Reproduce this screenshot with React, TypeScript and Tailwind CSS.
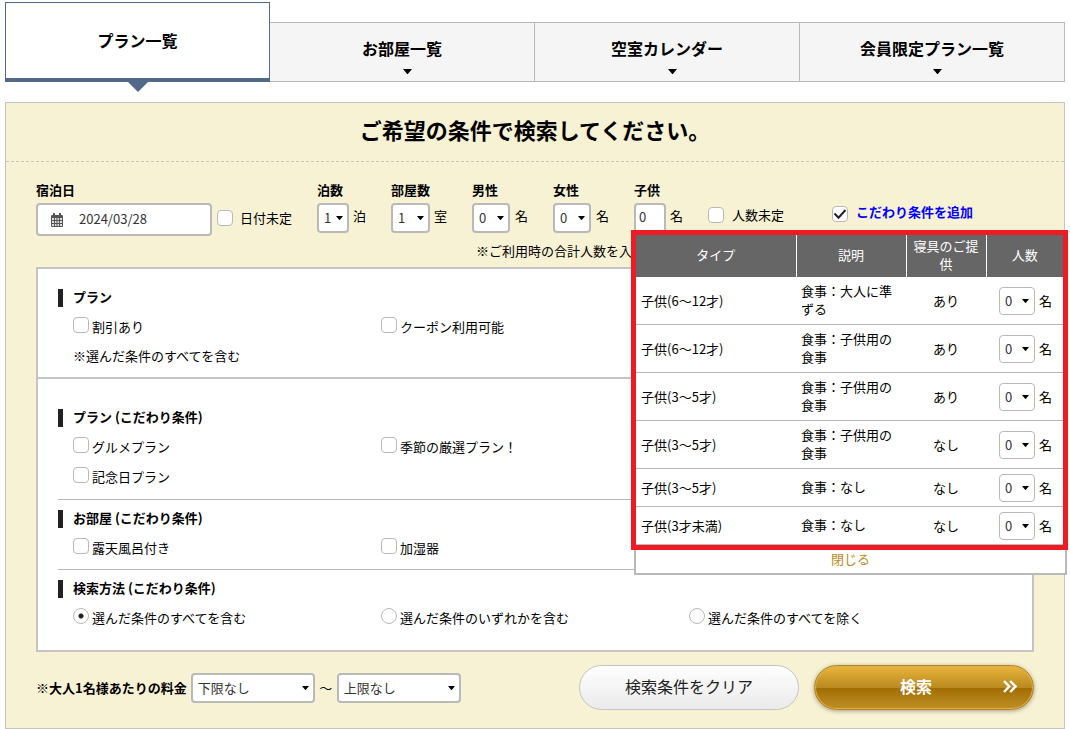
import { useState, type ReactNode } from "react";
import clsx from "clsx";

const TABS = ["お部屋一覧", "空室カレンダー", "会員限定プラン一覧"];

const CHILD_ROWS = [
    { type: "子供(6～12才)", note: "食事：大人に準ずる", bedding: "あり" },
    { type: "子供(6～12才)", note: "食事：子供用の食事", bedding: "あり" },
    { type: "子供(3～5才)", note: "食事：子供用の食事", bedding: "あり" },
    { type: "子供(3～5才)", note: "食事：子供用の食事", bedding: "なし" },
    { type: "子供(3～5才)", note: "食事：なし", bedding: "なし" },
    { type: "子供(3才未満)", note: "食事：なし", bedding: "なし" },
];

const METHODS = ["選んだ条件のすべてを含む", "選んだ条件のいずれかを含む", "選んだ条件のすべてを除く"];

function Caret({ className }: { className?: string }) {
    return (
        <svg className={clsx("pointer-events-none", className)} viewBox="0 0 8 4" preserveAspectRatio="none" aria-hidden="true">
            <path d="M0 0h8L4.5 3.8a.8.8 0 0 1-1 0z" fill="#000" />
        </svg>
    );
}

function CalendarIcon({ className }: { className?: string }) {
    return (
        <svg className={className} width="12" height="14" viewBox="0 0 12 14" aria-hidden="true">
            <path d="M2 0h2v2h4V0h2v2h1a1 1 0 0 1 1 1v10a1 1 0 0 1-1 1H1a1 1 0 0 1-1-1V3a1 1 0 0 1 1-1h1z" fill="#555" />
            <path
                d="M1 5h2v2H1zM4 5h1.500v2H4zM6.500 5H8v2H6.500zM9 5h2v2H9zM1 8h2v2H1zM4 8h1.500v2H4zM6.500 8H8v2H6.500zM9 8h2v2H9zM1 11h2v2H1zM4 11h1.500v2H4zM6.500 11H8v2H6.500zM9 11h2v2H9z"
                fill="#ddd"
            />
        </svg>
    );
}

type SelectProps = {
    id?: string;
    label?: string;
    options: string[];
    className: string;
};

function Select({ id, label, options, className }: SelectProps) {
    return (
        <span className="relative inline-flex items-center">
            <select
                id={id}
                aria-label={label}
                className={clsx("appearance-none rounded border-[#b9b9b9] bg-white text-[#333]", className)}
            >
                {options.map((option) => (
                    <option key={option}>{option}</option>
                ))}
            </select>
            <Caret className="absolute right-[6px] h-1 w-[7px]" />
        </span>
    );
}

function Checkbox({ label, checked = false, className = "gap-[3px]" }: { label: ReactNode; checked?: boolean; className?: string }) {
    return (
        <label className={clsx("flex", className)}>
            <span className="relative size-4 shrink-0">
                <input
                    type="checkbox"
                    defaultChecked={checked}
                    className="peer block size-4 appearance-none rounded border border-[#b9b9b9] bg-white"
                />
                <svg
                    className="pointer-events-none absolute inset-0 hidden peer-checked:block"
                    width="16"
                    height="16"
                    viewBox="0 0 16 16"
                    fill="none"
                    stroke="#222"
                    strokeWidth="2"
                >
                    <path d="M2.5 7.5l4 4.2L13.5 4" />
                </svg>
            </span>
            {label}
        </label>
    );
}

function Field({ id, label, children }: { id: string; label: string; children: ReactNode }) {
    return (
        <div className="relative">
            <label htmlFor={id} className="mb-[3px] block font-bold">{label}</label>
            <div className="flex items-start">{children}</div>
        </div>
    );
}

function SectionTitle({ children }: { children: ReactNode }) {
    return <h3 className="mb-[10px] border-l-[5px] border-[#222] pb-[2px] pl-[10px] leading-[16px] font-bold">{children}</h3>;
}

function Options({ children }: { children: ReactNode }) {
    return <div className="grid grid-cols-[308px_1fr] gap-y-[10px] pl-[15px]">{children}</div>;
}

function ChildPopup({ onClose }: { onClose: () => void }) {
    return (
        <div className="absolute top-[50px] left-[-3px] z-10 w-[437px]">
            <div className="border-[5px] border-[#ed1c24] bg-white">
                <table className="w-full table-fixed border-collapse leading-[18px]">
                    <colgroup>
                        <col className="w-[160px]" />
                        <col className="w-[110px]" />
                        <col className="w-[80px]" />
                        <col />
                    </colgroup>
                    <thead>
                        <tr className="h-[42px] bg-[#666] text-white *:px-[5px] *:pb-[2px] *:font-normal">
                            <th className="border-r border-white">タイプ</th>
                            <th className="border-r border-white">説明</th>
                            <th className="border-r border-white">寝具のご提供</th>
                            <th>人数</th>
                        </tr>
                    </thead>
                    <tbody>
                        {CHILD_ROWS.map((row, i) => (
                            <tr key={i} className="border-b border-[#b9b9b9]">
                                <td className="pl-[5px]">{row.type}</td>
                                <td className="px-[5px] pt-[5px] pb-[6px]">{row.note}</td>
                                <td className="text-center">{row.bedding}</td>
                                <td className="pl-[13px]">
                                    <div className="mt-[5px] mb-1 flex items-center gap-1">
                                        <Select label={`${row.type}の人数`} options={["0", "1", "2", "3"]} className="h-7 w-9 border pl-[5px]" />
                                        名
                                    </div>
                                </td>
                            </tr>
                        ))}
                    </tbody>
                </table>
            </div>
            <div className="mr-px ml-[3px] border-2 border-t-0 border-[#b9b9b9] bg-white pb-[5px] text-center leading-[18px]">
                <button type="button" onClick={onClose} className="text-[#b88a1b]">閉じる</button>
            </div>
        </div>
    );
}

export default function App() {
    const [isChildOpen, setIsChildOpen] = useState<boolean>(true);

    return (
        <div className="overflow-x-hidden bg-white px-[5px] pt-[2px] font-['Noto_Sans_CJK_JP',sans-serif] text-[13px] leading-[20px] text-black" lang="ja">
            <nav className="grid grid-cols-4 items-end text-base font-bold">
                <a href="#plan" className="relative flex h-20 items-center justify-center border border-b-4 border-[#53698a] bg-white pb-[2px]">
                    プラン一覧
                    <svg className="absolute top-full left-1/2 mt-1 -translate-x-1/2" width="20" height="10" viewBox="0 0 20 10" aria-hidden="true">
                        <path d="M0 0h20L10 10z" fill="#53698a" />
                    </svg>
                </a>
                {TABS.map((tab) => (
                    <a key={tab} href="#tab" className="flex h-[60px] flex-col items-center border-y border-r border-[#b9b9b9] bg-[#f5f5f5] pt-[13px]">
                        {tab}
                        <Caret className="mt-[9px] ml-[10px] h-[5px] w-[9px]" />
                    </a>
                ))}
            </nav>

            <form className="mt-5 border border-[#c4c4c4] bg-[#f7f2d4]" onSubmit={(e) => e.preventDefault()}>
                <h2 className="border-b border-dashed border-[#c4c4c4] pt-[11px] pb-[17px] text-center text-[22px] leading-[30px] font-bold">
                    ご希望の条件で検索してください。
                </h2>

                <div className="px-[30px] pt-[18px] pb-[18px]">
                    <div className="flex items-start gap-[25px]">
                        <Field id="date" label="宿泊日">
                            <span className="relative flex items-center">
                                <CalendarIcon className="absolute left-[15px]" />
                                <input
                                    id="date"
                                    type="text"
                                    defaultValue="2024/03/28"
                                    className="h-[33px] w-[176px] rounded border-2 border-[#b9b9b9] bg-white pb-[3px] pl-[41px] text-[#333]"
                                />
                            </span>
                            <Checkbox label="日付未定" className="mt-[5px] ml-[5px] items-center gap-[7px]" />
                        </Field>
                        <Field id="nights" label="泊数">
                            <Select id="nights" options={["1", "2", "3"]} className="h-[30px] w-8 border-2 pl-[5px]" />
                            <span className="mt-[3px] ml-1">泊</span>
                        </Field>
                        <Field id="rooms" label="部屋数">
                            <Select id="rooms" options={["1", "2", "3"]} className="h-[30px] w-[39px] border-2 pl-[5px]" />
                            <span className="mt-[3px] ml-1">室</span>
                        </Field>
                        <Field id="men" label="男性">
                            <Select id="men" options={["0", "1", "2"]} className="h-[30px] w-[38px] border-2 pl-[5px]" />
                            <span className="mt-[3px] ml-[5px]">名</span>
                        </Field>
                        <Field id="women" label="女性">
                            <Select id="women" options={["0", "1", "2"]} className="h-[30px] w-[38px] border-2 pl-[5px]" />
                            <span className="mt-[3px] ml-[5px]">名</span>
                        </Field>
                        <Field id="children" label="子供">
                            <input
                                id="children"
                                type="text"
                                readOnly
                                value="0"
                                onClick={() => setIsChildOpen(true)}
                                className="h-[30px] w-8 rounded border-2 border-[#b9b9b9] bg-white pb-[3px] pl-[3px] text-[#333]"
                            />
                            <span className="mt-[3px] ml-1">名</span>
                            {isChildOpen && <ChildPopup onClose={() => setIsChildOpen(false)} />}
                        </Field>
                        <Checkbox label="人数未定" className="mt-[25px] items-center gap-2" />
                        <Checkbox
                            checked
                            label={<span className="pb-1 font-bold text-[#00f]">こだわり条件を追加</span>}
                            className="mt-[22px] ml-[23px] items-center gap-2"
                        />
                    </div>
                    <p className="mt-[5px] pl-[440px]">※ご利用時の合計人数を入力してください。</p>

                    <div className="mt-[6px] border-2 border-[#c4c4c4] bg-white">
                        <section className="border-b-2 border-[#c4c4c4] px-5 pt-5 pb-[11px]">
                            <SectionTitle>プラン</SectionTitle>
                            <Options>
                                <Checkbox label="割引あり" />
                                <Checkbox label="クーポン利用可能" />
                            </Options>
                            <p className="mt-[9px] pl-[15px]">※選んだ条件のすべてを含む</p>
                        </section>
                        <div className="px-5 pt-[30px] pb-[22px]">
                            <section className="border-b border-[#b9b9b9] pb-3">
                                <SectionTitle>プラン (こだわり条件)</SectionTitle>
                                <Options>
                                    <Checkbox label="グルメプラン" />
                                    <Checkbox label="季節の厳選プラン！" />
                                    <Checkbox label="記念日プラン" />
                                </Options>
                            </section>
                            <section className="border-b border-[#b9b9b9] pt-[10px] pb-[11px]">
                                <SectionTitle>お部屋 (こだわり条件)</SectionTitle>
                                <Options>
                                    <Checkbox label="露天風呂付き" />
                                    <Checkbox label="加湿器" />
                                </Options>
                            </section>
                            <section className="pt-[10px]">
                                <SectionTitle>検索方法 (こだわり条件)</SectionTitle>
                                <div className="grid grid-cols-[308px_308px_1fr] pl-[15px]">
                                    {METHODS.map((method, i) => (
                                        <label key={method} className="flex gap-[3px]">
                                            <input
                                                type="radio"
                                                name="method"
                                                defaultChecked={i === 0}
                                                className="size-4 appearance-none rounded-full border border-[#b9b9b9] bg-white checked:bg-[radial-gradient(circle,#222_2px,#fff_3px)]"
                                            />
                                            {method}
                                        </label>
                                    ))}
                                </div>
                            </section>
                        </div>
                    </div>

                    <div className="mt-[13px] flex items-center">
                        <label htmlFor="min-price" className="mr-1 font-bold">※大人1名様あたりの料金</label>
                        <Select id="min-price" options={["下限なし"]} className="h-[30px] w-[124px] border-2 pl-[5px]" />
                        <span className="w-[22px] text-center">～</span>
                        <Select label="料金の上限" options={["上限なし"]} className="h-[30px] w-[124px] border-2 pl-[5px]" />
                        <div className="ml-auto flex gap-[15px]">
                            <button
                                type="reset"
                                className="h-[45px] w-[220px] rounded-full border border-[#c4c4c4] bg-linear-to-b from-white to-[#eaeaea] pb-1 text-base text-[#222]"
                            >
                                検索条件をクリア
                            </button>
                            <button
                                type="submit"
                                className="relative h-[45px] w-[220px] rounded-full border border-[#b8851a] bg-[linear-gradient(#eab53c,#b98a20_50%,#a06c00_50%,#bf8f26)] pr-4 pb-1 text-base font-bold text-white shadow-[inset_0_0_0_1px_#d9ae56,0_1px_4px_rgba(0,0,0,0.35)]"
                            >
                                検索
                                <svg
                                    className="absolute top-[14px] right-[16px]"
                                    width="14"
                                    height="13"
                                    viewBox="0 0 14 13"
                                    fill="none"
                                    stroke="#fff"
                                    strokeWidth="2.5"
                                    aria-hidden="true"
                                >
                                    <path d="M1 1l5.200 5.500L1 12M7.200 1l5.200 5.500L7.200 12" />
                                </svg>
                            </button>
                        </div>
                    </div>
                </div>
            </form>
        </div>
    );
}
